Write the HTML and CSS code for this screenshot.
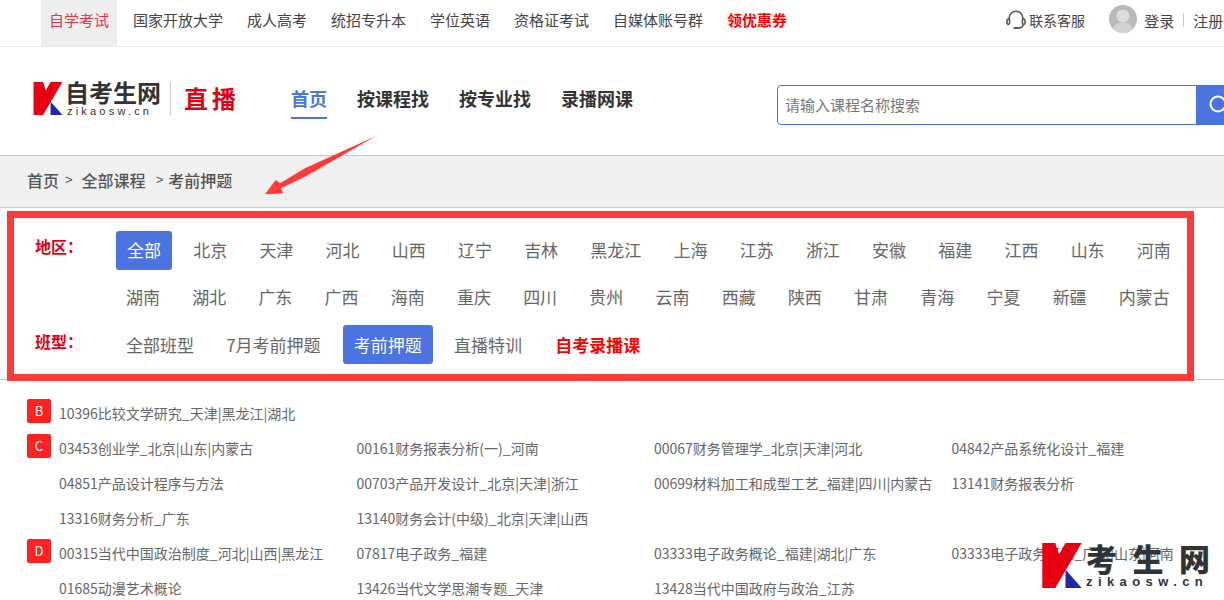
FILE: index.html
```html
<!DOCTYPE html>
<html>
<head>
    <meta charset="UTF-8">
    <meta name="viewport" content="width=device-width, initial-scale=1.0">
    <title>自考生网直播</title>
    <link rel="stylesheet" href="styles.css">
</head>
<body>
    <div class="page">
        <div class="topbar">
            <a class="top-link active">自学考试</a>
            <a class="top-link">国家开放大学</a>
            <a class="top-link">成人高考</a>
            <a class="top-link">统招专升本</a>
            <a class="top-link">学位英语</a>
            <a class="top-link">资格证考试</a>
            <a class="top-link">自媒体账号群</a>
            <a class="top-link hot">领优惠券</a>
            <div class="top-right">
                <svg class="headset" width="20" height="20" viewBox="0 0 20 20" fill="none" stroke="#555" stroke-width="1.6">
                    <path d="M3.2 10V8a6.8 6.8 0 0 1 13.6 0v2"/>
                    <rect x="1" y="9" width="2.6" height="5.4" rx="1.3"/>
                    <rect x="16.4" y="9" width="2.6" height="5.4" rx="1.3"/>
                    <path d="M17 14.5c0 2.4-2 3.6-5 3.6"/>
                    <rect x="7.5" y="17" width="5" height="2" rx="1" fill="#555" stroke="none"/>
                </svg>
                <span class="service">联系客服</span>
                <svg class="avatar" width="28" height="28" viewBox="0 0 28 28">
                    <circle cx="14" cy="14" r="14" fill="#b9b9b9"/>
                    <circle cx="14" cy="11" r="6.5" fill="#dcdcdc"/>
                    <path d="M4 24c2-5 6-6.500 10-6.500s8 1.500 10 6.500a14 14 0 0 1-20 0z" fill="#d2d2d2"/>
                </svg>
                <span class="login">登录</span>
                <i class="top-sep"></i>
                <span class="login">注册</span>
            </div>
        </div>

        <div class="header">
            <div class="logo">
                <svg class="logo-k" width="30" height="33" viewBox="0 0 85 97">
                    <path d="M0 0H28L36 25 50 0H85L28 97H0z" fill="#e60012"/>
                    <path d="M50 57 85 97H50z" fill="#2226a8"/>
                </svg>
                <div class="logo-words">
                    <div class="logo-cn">自考生网</div>
                    <div class="logo-en">zikaosw.cn</div>
                </div>
                <div class="logo-live">直播</div>
            </div>
            <div class="nav">
                <a class="nav-link active">首页</a>
                <a class="nav-link">按课程找</a>
                <a class="nav-link">按专业找</a>
                <a class="nav-link">录播网课</a>
            </div>
            <div class="search">
                <input class="search-input" type="text" placeholder="请输入课程名称搜索">
                <div class="search-btn">
                    <svg width="28" height="28" viewBox="0 0 28 28" fill="none" stroke="#fff" stroke-width="2">
                        <circle cx="12" cy="13" r="7.500"/>
                        <path d="M18 19l5 5"/>
                    </svg>
                </div>
            </div>
        </div>

        <div class="crumbs">
            <span>首页</span><b class="gt first">&gt;</b>
            <span>全部课程</span><b class="gt second">&gt;</b>
            <span>考前押题</span>
        </div>

        <div class="filter">
            <div class="filter-row">
                <div class="filter-name">地区：</div>
                <div class="filter-items">
                    <a class="chip on">全部</a>
                    <a class="chip">北京</a>
                    <a class="chip">天津</a>
                    <a class="chip">河北</a>
                    <a class="chip">山西</a>
                    <a class="chip">辽宁</a>
                    <a class="chip">吉林</a>
                    <a class="chip">黑龙江</a>
                    <a class="chip">上海</a>
                    <a class="chip">江苏</a>
                    <a class="chip">浙江</a>
                    <a class="chip">安徽</a>
                    <a class="chip">福建</a>
                    <a class="chip">江西</a>
                    <a class="chip">山东</a>
                    <a class="chip">河南</a>
                    <a class="chip back">湖南</a>
                    <a class="chip">湖北</a>
                    <a class="chip">广东</a>
                    <a class="chip">广西</a>
                    <a class="chip">海南</a>
                    <a class="chip">重庆</a>
                    <a class="chip">四川</a>
                    <a class="chip">贵州</a>
                    <a class="chip">云南</a>
                    <a class="chip">西藏</a>
                    <a class="chip">陕西</a>
                    <a class="chip">甘肃</a>
                    <a class="chip">青海</a>
                    <a class="chip">宁夏</a>
                    <a class="chip">新疆</a>
                    <a class="chip">内蒙古</a>
                </div>
            </div>
            <div class="filter-row">
                <div class="filter-name">班型：</div>
                <div class="filter-items">
                    <a class="chip back">全部班型</a>
                    <a class="chip">7月考前押题</a>
                    <a class="chip on nudge">考前押题</a>
                    <a class="chip">直播特训</a>
                    <a class="chip red nudge">自考录播课</a>
                </div>
            </div>
        </div>

        <div class="courses">
            <div class="letter-row">
                <div class="letter">B</div>
                <div class="course-grid">
                    <a>10396比较文学研究_天津|黑龙江|湖北</a>
                </div>
            </div>
            <div class="letter-row">
                <div class="letter">C</div>
                <div class="course-grid">
                    <a>03453创业学_北京|山东|内蒙古</a>
                    <a>00161财务报表分析(一)_河南</a>
                    <a>00067财务管理学_北京|天津|河北</a>
                    <a>04842产品系统化设计_福建</a>
                    <a>04851产品设计程序与方法</a>
                    <a>00703产品开发设计_北京|天津|浙江</a>
                    <a>00699材料加工和成型工艺_福建|四川|内蒙古</a>
                    <a>13141财务报表分析</a>
                    <a>13316财务分析_广东</a>
                    <a>13140财务会计(中级)_北京|天津|山西</a>
                </div>
            </div>
            <div class="letter-row">
                <div class="letter">D</div>
                <div class="course-grid">
                    <a>00315当代中国政治制度_河北|山西|黑龙江</a>
                    <a>07817电子政务_福建</a>
                    <a>03333电子政务概论_福建|湖北|广东</a>
                    <a>03333电子政务概论_广东|山东|河南</a>
                    <a>01685动漫艺术概论</a>
                    <a>13426当代文学思潮专题_天津</a>
                    <a>13428当代中国政府与政治_江苏</a>
                </div>
            </div>
        </div>

        <!-- 截图上的标注 -->
        <div class="mark-box"></div>
        <svg class="mark-arrow" width="120" height="66" viewBox="0 0 120 66">
            <path d="M117 2 46 34.300 21 49.300 16.700 46 6 60.300 24.300 59.300 22 54.300 46 42.700z" fill="#ff3a3a"/>
        </svg>

        <!-- 水印 -->
        <div class="watermark">
            <svg width="40" height="45" viewBox="0 0 85 97">
                <path d="M0 0H28L36 25 50 0H85L28 97H0z" fill="#e60012"/>
                <path d="M50 57 85 97H50z" fill="#2226a8"/>
            </svg>
            <div class="wm-words">
                <div class="wm-cn">考生网</div>
                <div class="wm-en">zikaosw.cn</div>
            </div>
        </div>
    </div>
</body>
</html>
```

FILE: styles.css
```css
html, body {
    margin: 0;
    height: 600px;
    overflow: hidden;
    background: #fff;
}
body {
    font-family: "Noto Sans CJK SC", "Noto Sans", sans-serif;
    color: #666;
}
.page {
    position: relative;
    width: 1224px;
    height: 600px;
    overflow: hidden;
}

/* top bar */
.topbar {
    display: flex;
    align-items: flex-start;
    height: 46px;
    padding-left: 41px;
    border-bottom: 1px solid #e6e6e6;
    gap: 8px;
}
.top-link {
    display: block;
    padding: 0 8px 6px;
    line-height: 40px;
    font-size: 15px;
    color: #444;
    white-space: nowrap;
}
.top-link.active {
    background: #eee;
    color: #e8344a;
}
.top-link.hot {
    color: #f00;
    font-weight: bold;
}
.top-right {
    display: flex;
    align-items: center;
    height: 40px;
    margin-left: 203px;
    white-space: nowrap;
}
.headset {
    margin-right: 3px;
}
.service {
    font-size: 14px;
    color: #444;
    margin-right: 24px;
}
.avatar {
    margin-right: 7px;
    margin-top: -2px;
}
.login {
    font-size: 15px;
    color: #444;
}
.top-sep {
    width: 1px;
    height: 14px;
    background: #ccc;
    margin: 0 9px;
}

/* logo + nav + search */
.header {
    display: flex;
    align-items: flex-start;
    height: 108px;
    border-bottom: 1px solid #ccc;
}
.logo {
    display: flex;
    align-items: flex-start;
    margin: 35px 0 0 33px;
    width: 258px;
    flex: none;
}
.logo-words {
    margin-left: 2px;
    width: 105px;
    height: 34px;
    border-right: 1px solid #ccc;
}
.logo-cn {
    font-size: 24px;
    line-height: 24px;
    font-weight: bold;
    color: #333;
    margin-top: -2px;
}
.logo-en {
    font-size: 11px;
    line-height: 12px;
    letter-spacing: 3.2px;
    color: #333;
    margin: 1px 0 0 2px;
    font-family: "Liberation Sans", sans-serif;
}
.logo-live {
    margin-left: 13px;
    font-size: 24px;
    line-height: 32px;
    font-weight: bold;
    letter-spacing: 4px;
    color: #e60012;
}
.nav {
    display: flex;
    gap: 30px;
    margin-top: 35px;
    width: 486px;
    flex: none;
}
.nav-link {
    display: block;
    font-size: 18px;
    line-height: 32px;
    height: 37px;
    font-weight: bold;
    color: #333;
    box-sizing: border-box;
}
.nav-link.active {
    color: #4b74e0;
    border-bottom: 2px solid #4b74e0;
}
.search {
    display: flex;
    height: 40px;
    margin-top: 38px;
    flex: none;
}
.search-input {
    width: 420px;
    height: 40px;
    box-sizing: border-box;
    border: 1px solid #4b74e0;
    border-radius: 4px 0 0 4px;
    padding: 0 7px 2px;
    font-family: inherit;
    font-size: 15px;
    outline: none;
}
.search-input::placeholder {
    color: #777;
}
.search-btn {
    width: 60px;
    height: 40px;
    background: #4b74e0;
    margin-left: -1px;
    padding: 6px 0 0 10px;
    box-sizing: border-box;
}

/* breadcrumb */
.crumbs {
    display: flex;
    align-items: center;
    height: 47px;
    padding: 0 0 4px 27px;
    background: #f0f0f0;
    border-bottom: 1px solid #ccc;
    font-size: 16px;
    font-weight: 500;
    color: #555;
}
.gt {
    font-size: 13px;
    font-weight: normal;
    font-family: "Liberation Sans", sans-serif;
}
.gt.first {
    margin: 0 9px 0 6px;
}
.gt.second {
    margin: 0 5px 0 10px;
}

/* filter */
.filter {
    padding: 23px 0 14px 27px;
    border-bottom: 1px solid #ccc;
    height: 134px;
}
.filter-row {
    display: flex;
}
.filter-name {
    flex: none;
    width: 89px;
    height: 30px;
    font-size: 16px;
    line-height: 30px;
    font-weight: bold;
    color: #e60012;
    padding-left: 8px;
    box-sizing: border-box;
}
.filter-items {
    display: flex;
    flex-wrap: wrap;
    column-gap: 10.2px;
    row-gap: 8px;
    width: 1090px;
}
.chip {
    display: block;
    padding: 0 11px 2px;
    height: 37px;
    line-height: 37px;
    font-size: 17px;
    color: #666;
    border-radius: 3px;
    white-space: nowrap;
}
.chip.back {
    margin-left: -1px;
}
.chip.nudge {
    margin-left: 1px;
}
.chip.on {
    background: #4b74e0;
    color: #fff;
}
.chip.red {
    color: #f00;
    font-weight: bold;
}
.filter-row + .filter-row {
    margin-top: 8px;
}
.filter-row + .filter-row .filter-name {
    height: 32px;
    line-height: 32px;
}
.filter-row + .filter-row .chip {
    padding-bottom: 0;
    height: 39px;
    line-height: 39px;
}

/* course list */
.courses {
    padding: 19px 0 0 27px;
}
.letter-row {
    display: flex;
    margin-bottom: 11px;
}
.letter {
    flex: none;
    width: 24px;
    height: 24px;
    line-height: 24px;
    margin-right: 8px;
    background: #ff2020;
    border-radius: 2px;
    color: #fff;
    font-size: 13px;
    text-align: center;
}
.course-grid {
    display: grid;
    grid-template-columns: repeat(4, 297.5px);
    grid-auto-rows: 35px;
    margin-bottom: -11px;
}
.course-grid a {
    font-size: 14px;
    line-height: 28px;
    color: #666;
    white-space: nowrap;
}

/* annotations on the picture */
.mark-box {
    position: absolute;
    left: 7px;
    top: 211px;
    width: 1187px;
    height: 170px;
    border: 7px solid #ff3a3a;
    box-sizing: border-box;
}
.mark-arrow {
    position: absolute;
    left: 259px;
    top: 134px;
}
.watermark {
    position: absolute;
    left: 1042px;
    top: 540px;
    display: flex;
    gap: 4px;
}
.watermark svg {
    margin-top: 3px;
}
.wm-cn {
    width: 124px;
    font-size: 31px;
    line-height: 36px;
    font-weight: 900;
    text-align-last: justify;
    color: #333;
    white-space: nowrap;
}
.wm-en {
    font-family: "Liberation Sans", sans-serif;
    font-size: 13px;
    line-height: 12px;
    font-weight: bold;
    letter-spacing: 5.4px;
    color: #333;
    white-space: nowrap;
}
```
